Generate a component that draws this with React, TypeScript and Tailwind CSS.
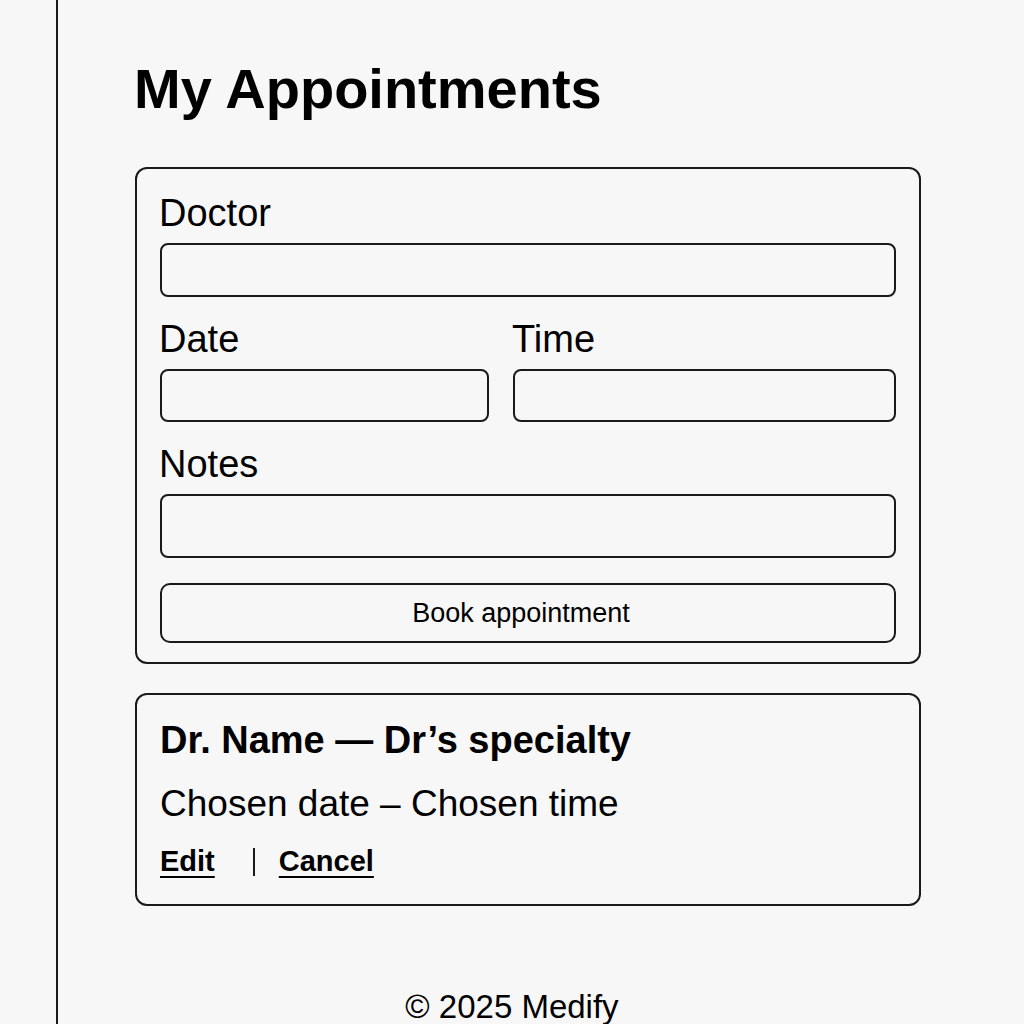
import React from 'react';

const font = { fontFamily: '"Liberation Sans", Arial, sans-serif' };

const Label: React.FC<{ children: React.ReactNode }> = ({ children }) => (
  <label className="block text-[38px] leading-none text-black mb-[12px] ml-[-1px]">{children}</label>
);

const inputCls =
  'block w-full bg-transparent border-2 border-[#1a1a1a] rounded-[8px] outline-none px-3 text-[22px]';

export default function App() {
  return (
    <div className="min-h-screen bg-[#f7f7f7] pl-[56px]" style={font}>
      <div className="min-h-screen border-l-2 border-[#1a1a1a] pt-[61px]">
        <div className="ml-[77px] w-[786px]">
          <h1 className="text-[56px] font-bold leading-none text-black ml-[-1px]">My Appointments</h1>

          <form
            onSubmit={(e) => e.preventDefault()}
            className="mt-[50px] border-2 border-[#1a1a1a] rounded-[12px] px-[23px] pt-[25px] pb-[19px]"
          >
            <Label>Doctor</Label>
            <input className={`${inputCls} h-[54px] mt-[-1px]`} />

            <div className="grid grid-cols-[329px_1fr] gap-x-[24px] mt-[23px]">
              <div>
                <Label>Date</Label>
                <input className={`${inputCls} h-[53px] mt-[-1px]`} />
              </div>
              <div>
                <Label>Time</Label>
                <input className={`${inputCls} h-[53px] mt-[-1px]`} />
              </div>
            </div>

            <div className="mt-[23px]">
              <Label>Notes</Label>
              <input className={`${inputCls} h-[64px] mt-[-1px]`} />
            </div>

            <button
              type="submit"
              className="mt-[25px] w-full h-[60px] border-2 border-[#1a1a1a] rounded-[10px] pr-[14px] text-[27px] leading-none text-black"
            >
              Book appointment
            </button>
          </form>

          <div className="mt-[29px] border-2 border-[#1a1a1a] rounded-[12px] px-[23px] pt-[26px] pb-[28px]">
            <h2 className="text-[38px] font-bold leading-none text-black">Dr. Name — Dr’s specialty</h2>
            <p className="mt-[26px] text-[37px] leading-none text-black">Chosen date – Chosen time</p>
            <div className="mt-[25px] flex items-center text-[29px] font-bold leading-none text-black">
              <a href="#" className="underline decoration-2 underline-offset-[5px]">Edit</a>
              <span className="ml-[38px] mr-[24px] w-[2px] h-[28px] bg-[#1a1a1a]" />
              <a href="#" className="underline decoration-2 underline-offset-[5px]">Cancel</a>
            </div>
          </div>
        </div>

        <footer className="mt-[84px] pr-[58px] text-center text-[33px] leading-none text-black">
          © 2025 Medify
        </footer>
      </div>
    </div>
  );
}
